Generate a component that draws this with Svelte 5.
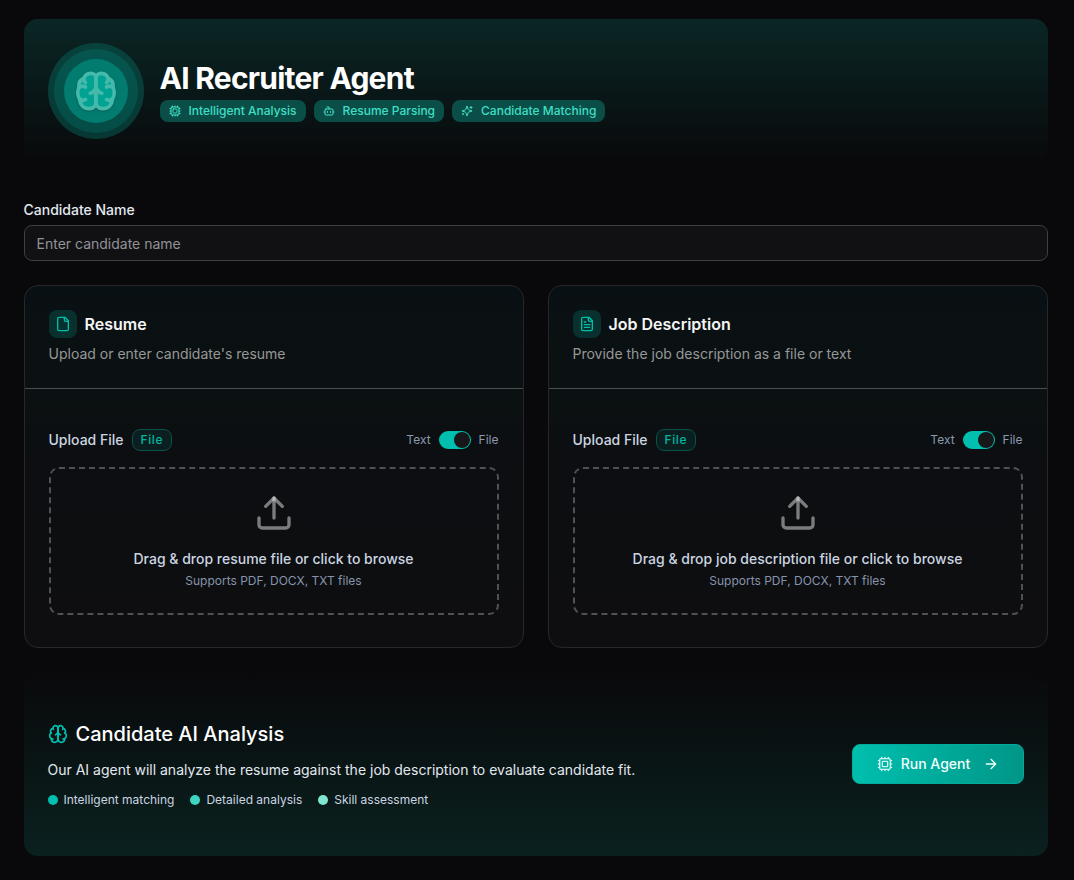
<script>
  const cards = [
    { title: 'Resume', desc: "Upload or enter candidate's resume", icon: 'file', drop: 'Drag & drop resume file or click to browse' },
    { title: 'Job Description', desc: 'Provide the job description as a file or text', icon: 'doc', drop: 'Drag & drop job description file or click to browse' }
  ];
  const tags = [
    { label: 'Intelligent Analysis', icon: 'chip' },
    { label: 'Resume Parsing', icon: 'bot' },
    { label: 'Candidate Matching', icon: 'spark' }
  ];
  const points = [
    { label: 'Intelligent matching', color: '#00bfae' },
    { label: 'Detailed analysis', color: '#3cd6c0' },
    { label: 'Skill assessment', color: '#80e5d0' }
  ];
</script>

{#snippet icon(name, size, width = 2)}
  <svg width={size} height={size} viewBox="0 0 24 24" fill="none" stroke="currentColor" stroke-width={width} stroke-linecap="round" stroke-linejoin="round">
    {#if name === 'chip'}
      <path d="M12 20v2M12 2v2M17 20v2M17 2v2M2 12h2M2 17h2M2 7h2M20 12h2M20 17h2M20 7h2M7 20v2M7 2v2" />
      <rect x="4" y="4" width="16" height="16" rx="2" /><rect x="8" y="8" width="8" height="8" rx="1" />
    {:else if name === 'bot'}
      <path d="M12 8V4H8M2 14h2M20 14h2M15 13v2M9 13v2" /><rect x="4" y="8" width="16" height="12" rx="2" />
    {:else if name === 'spark'}
      <path d="M9.937 15.5A2 2 0 0 0 8.5 14.063l-6.135-1.582a.5.5 0 0 1 0-.962L8.5 9.936A2 2 0 0 0 9.937 8.5l1.582-6.135a.5.5 0 0 1 .963 0L14.063 8.5A2 2 0 0 0 15.5 9.937l6.135 1.581a.5.5 0 0 1 0 .964L15.5 14.063a2 2 0 0 0-1.437 1.437l-1.582 6.135a.5.5 0 0 1-.963 0z" />
      <path d="M20 3v4M22 5h-4M4 17v2M5 18H3" />
    {:else if name === 'file'}
      <path d="M15 2H6a2 2 0 0 0-2 2v16a2 2 0 0 0 2 2h12a2 2 0 0 0 2-2V7Z" /><path d="M14 2v4a2 2 0 0 0 2 2h4" />
    {:else if name === 'doc'}
      <path d="M15 2H6a2 2 0 0 0-2 2v16a2 2 0 0 0 2 2h12a2 2 0 0 0 2-2V7Z" /><path d="M14 2v4a2 2 0 0 0 2 2h4M10 9H8M16 13H8M16 17H8" />
    {:else if name === 'upload'}
      <path d="M21 15v4a2 2 0 0 1-2 2H5a2 2 0 0 1-2-2v-4" /><path d="M17 8l-5-5-5 5" /><path d="M12 3v12" />
    {:else if name === 'arrow'}
      <path d="M5 12h14M12 5l7 7-7 7" />
    {:else}
      <path d="M12 5a3 3 0 1 0-5.997.125 4 4 0 0 0-2.526 5.770 4 4 0 0 0 .556 6.588A4 4 0 1 0 12 18Z" />
      <path d="M12 5a3 3 0 1 1 5.997.125 4 4 0 0 1 2.526 5.770 4 4 0 0 1-.556 6.588A4 4 0 1 1 12 18Z" />
      <path d="M15 13a4.500 4.500 0 0 1-3-4 4.500 4.500 0 0 1-3 4M17.599 6.500a3 3 0 0 0 .399-1.375M6.003 5.125A3 3 0 0 0 6.401 6.500M3.477 10.896a4 4 0 0 1 .585-.396M19.938 10.500a4 4 0 0 1 .585.396M6 18a4 4 0 0 1-1.967-.516M19.967 17.484A4 4 0 0 1 18 18" />
    {/if}
  </svg>
{/snippet}

{#snippet half()}
  <path class="lobe" d="M22 9C22 6 19.800 4.300 17 4.300C13.200 4.300 10.600 6.500 9.800 9.500C6 10.700 4.500 14 5 18.500C3.300 22 3.400 27 5.600 30C6 35.500 9.500 39.600 14.500 39.700C18.500 39.800 22 37.500 22 34Z" />
  <path d="M9.800 9.500C9.800 11.500 10.400 12.700 11.500 13.500M5 18.500C6.600 17.200 9 16.800 11.500 18M5.600 30C7.500 31.500 9.800 31.500 11.500 30.500M22 18C21.300 21 19.500 23.500 16.200 24.300" />
{/snippet}

<main>
  <header>
    <div class="halo"><div class="ring"><div class="core">
      <svg width="44" height="44" viewBox="0 0 44 44" stroke="currentColor" stroke-width="3.700" stroke-linecap="round" stroke-linejoin="round">
        {@render half()}
        <g transform="translate(44 0) scale(-1 1)">{@render half()}</g>
      </svg>
    </div></div></div>
    <div>
      <h1>AI Recruiter Agent</h1>
      <div class="tags">
        {#each tags as t}<span class="tag">{@render icon(t.icon, 12)}{t.label}</span>{/each}
      </div>
    </div>
  </header>

  <section class="field">
    <label for="name">Candidate Name</label>
    <input id="name" placeholder="Enter candidate name" />
  </section>

  <section class="cards">
    {#each cards as c}
      <article>
        <div class="head">
          <div class="title"><span class="badge">{@render icon(c.icon, 16)}</span><h2>{c.title}</h2></div>
          <p>{c.desc}</p>
        </div>
        <div class="body">
          <div class="row">
            <div class="left"><span>Upload File</span><span class="pill">File</span></div>
            <div class="right"><span>Text</span><span class="switch"><i></i></span><span>File</span></div>
          </div>
          <div class="drop">
            {@render icon('upload', 40)}
            <strong>{c.drop}</strong>
            <small>Supports PDF, DOCX, TXT files</small>
          </div>
        </div>
      </article>
    {/each}
  </section>

  <footer>
    <div>
      <h3>{@render icon('brain', 20)}Candidate AI Analysis</h3>
      <p>Our AI agent will analyze the resume against the job description to evaluate candidate fit.</p>
      <div class="points">
        {#each points as p}<span><i style:background={p.color}></i>{p.label}</span>{/each}
      </div>
    </div>
    <button>{@render icon('chip', 16)}<span>Run Agent</span>{@render icon('arrow', 16)}</button>
  </footer>
</main>

<style>
  :global(body) { margin: 0; background: #09090b; }
  * { box-sizing: border-box; margin: 0; }
  main { width: 1074px; height: 880px; overflow: hidden; padding: 19px 26.5px 24px 23.5px; font: 14px/20px Inter, sans-serif; color: #fff; }
  svg { flex: none; display: block; }
  header { height: 144px; border-radius: 14px; padding: 24px; display: flex; align-items: center; gap: 16px; background: linear-gradient(180deg, #0a2625, #09090b); }
  .halo { width: 96px; height: 96px; border-radius: 50%; background: linear-gradient(#08423d, #083733); display: grid; place-items: center; }
  .ring { width: 84px; height: 84px; border-radius: 50%; background: linear-gradient(#05564f, #054c46); display: grid; place-items: center; }
  .core { width: 64px; height: 64px; border-radius: 50%; background: #037c70; display: grid; place-items: center; color: #45b9ab; }
  .core svg { fill: none; filter: drop-shadow(0 1px 1px rgba(0, 60, 54, .45)); }
  .core .lobe { fill: #00a391; }
  h1 { font-size: 30px; line-height: 36px; font-weight: 700; letter-spacing: -.75px; }
  .tags { display: flex; gap: 8px; margin-top: 4px; }
  .tag { display: flex; align-items: center; gap: 8px; height: 22px; padding: 0 9px; border-radius: 8px; background: #0b4e48; color: #3fdec5; font-size: 12px; font-weight: 500; }
  .field { margin-top: 37px; }
  label { display: block; font-weight: 500; color: #e2e8f0; }
  input { display: block; width: 100%; height: 36px; margin-top: 5px; padding: 0 12px; background: #111113; border: 1px solid #3f3f43; border-radius: 8px; font: 14px/20px Inter, sans-serif; color: #fff; }
  input::placeholder { color: #919198; opacity: 1; }
  .cards { display: grid; grid-template-columns: 1fr 1fr; gap: 24px; margin-top: 24px; }
  article { height: 363px; border: 1px solid #252729; border-radius: 14px; background: linear-gradient(180deg, #091013 0, #0b1112 28%, #0c0e11 48%, #0e0e10 100%); }
  .head { height: 103px; padding: 24px; border-bottom: 1px solid #4c504f; }
  .title { display: flex; align-items: center; gap: 8px; }
  .badge { width: 28px; height: 28px; border-radius: 8px; background: #08302f; color: #00bfa8; display: grid; place-items: center; }
  h2 { font-size: 16px; line-height: 24px; font-weight: 600; color: #f5f5f5; }
  .head p { margin-top: 6px; color: #979797; }
  .body { padding: 40px 24px 32px; }
  .row, .left, .right { display: flex; align-items: center; gap: 8px; }
  .row { justify-content: space-between; height: 22px; }
  .left { font-weight: 500; color: #cbd5e1; }
  .pill { width: 40px; height: 22px; padding: 0 8px; border: 1px solid #08514b; border-radius: 8px; background: #0c1f20; color: #00b7a0; font-size: 12px; letter-spacing: .6px; }
  .right { font-size: 12px; color: #8b98b0; }
  .switch { width: 32px; height: 18px; border-radius: 9px; background: #00bfae; padding: 1px; display: flex; justify-content: flex-end; }
  .switch i { width: 16px; height: 16px; border-radius: 50%; background: #18181b; }
  .drop { height: 148px; margin-top: 16px; border: 2px dashed #505153; border-radius: 10px; display: flex; flex-direction: column; align-items: center; padding-top: 24px; color: rgba(255, 255, 255, .46); }
  .drop strong { margin-top: 16px; font-weight: 500; color: #cbd5e1; }
  .drop small { margin-top: 4px; font-size: 12px; line-height: 16px; color: #8594ac; }
  footer { height: 184px; margin-top: 24px; border-radius: 14px; padding: 0 24px; display: flex; align-items: center; justify-content: space-between; background: linear-gradient(180deg, #09090b, #0a211f); }
  h3 { display: flex; align-items: center; gap: 8px; font-size: 20px; line-height: 28px; font-weight: 500; }
  h3 svg { color: #00bfae; }
  footer p { margin-top: 12px; color: #e2e8f0; }
  .points { display: flex; gap: 16px; margin-top: 12px; font-size: 12px; line-height: 16px; color: #cbd5e1; }
  .points span { display: flex; align-items: center; gap: 6px; }
  .points i { width: 10px; height: 10px; border-radius: 50%; }
  button { width: 172px; height: 40px; padding: 0 0 0 1px; justify-content: center; white-space: nowrap; display: flex; align-items: center; gap: 8px; border: 1px solid #00ad9a; border-radius: 8px; background: linear-gradient(90deg, #00bfae, #009688); color: #f0fffc; font: 500 14px/20px Inter, sans-serif; }
  button span { margin-right: 5px; }
  button svg:first-child { opacity: .85; }
</style>
